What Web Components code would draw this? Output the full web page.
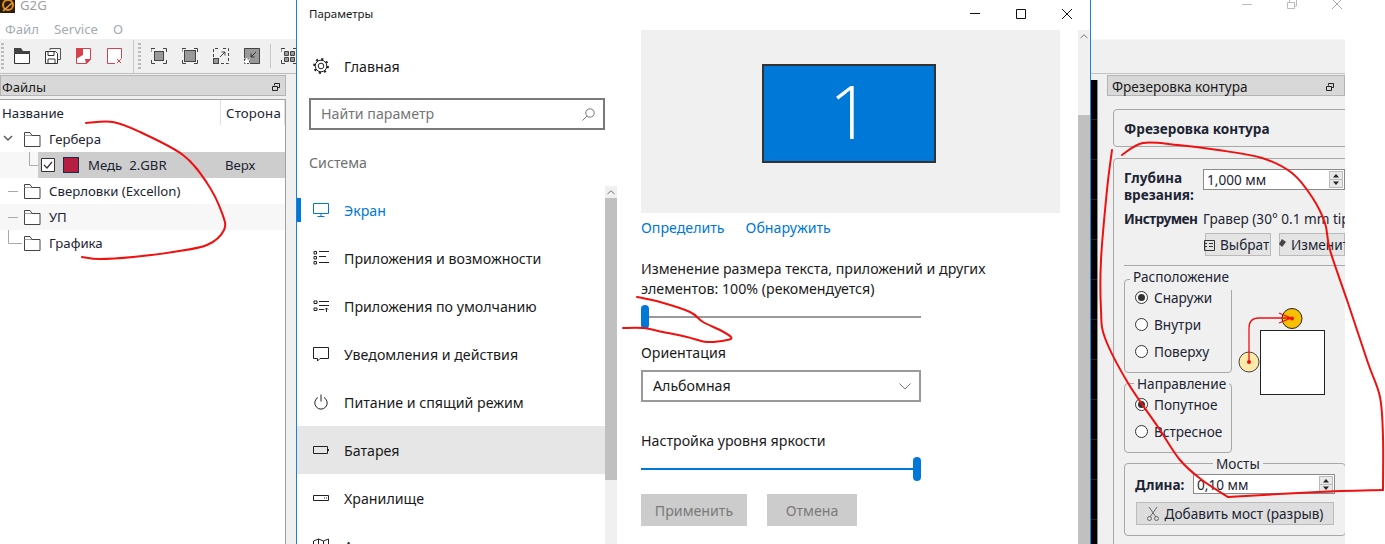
<!DOCTYPE html>
<html lang="ru">
<head>
<meta charset="utf-8">
<title>G2G</title>
<style>
  html, body { margin: 0; height: 544px; overflow: hidden; background: #fff; }
  body { display: flex; width: 1385px; position: relative; font-family: "Noto Sans", sans-serif; }
</style>
</head>
<body>
  <g2g-files></g2g-files>
  <settings-window></settings-window>
  <mill-pane></mill-pane>
  <ink-overlay></ink-overlay>

<script>
const QT_FONT = `font: 13.2px/17px "Noto Sans", sans-serif;`;

const TOOL_ICONS = {
  open: `<path d="M.5 5.5h15v10H.5z" fill="#fff" stroke="#333"/><path d="M0 0h7l2 3h7v2.5H0z" fill="#444"/>`,
  save: `<path d="M5 2V.5h10.5v11H13" fill="none" stroke="#555"/><path d="M.5 3.5h10l2 2v10H.5z" fill="#fff" stroke="#333"/><path d="M3 3.5h6v4H3zM3 11h7v4.5H3z" fill="none" stroke="#333"/>`,
  red: `<path d="M4 .5h10.5v11l-4 4H.5v-11" fill="#fff" stroke="#d8404f"/><path d="M0 0h7v7l-7 4zM9 11h6l-5 5z" fill="#d8404f"/>`,
  redx: `<path d="M8 15.5H.5V.5h14v10" fill="#fff" stroke="#d8404f"/><path d="M10 11l4 4m0-4l-4 4" stroke="#d8404f" fill="none"/>`,
  fitall: `<path d="M0 4V.5h4M12 .5h3.500V4M15.500 12v3.500H12M4 15.500H.5V12" fill="none" stroke="#444"/><rect x="3.500" y="3.500" width="9" height="9" fill="#999" stroke="#444"/>`,
  fit: `<path d="M0 4V.5h4M12 .5h3.500V4M15.500 12v3.500H12M4 15.500H.5V12" fill="none" stroke="#444"/><rect x="2.500" y="2.500" width="11" height="11" fill="#999" stroke="#444"/>`,
  zoomin: `<path d="M5 .5H.5V9M10 .5h5.500V15.500H7" fill="none" stroke="#444" stroke-dasharray="3 2"/><rect x=".5" y="10.500" width="5" height="5" fill="#999" stroke="#444"/><path d="M7 9l5-5M8.500 4H12v3.500" fill="none" stroke="#444"/>`,
  zoomout: `<path d="M0 0h16v16H6v-6H0z" fill="#999"/><path d="M.5 10V.5h15v15H6" fill="none" stroke="#444"/><path d="M.5 11v4.500h5V11z" fill="#fff" stroke="#444" stroke-dasharray="2 1.500"/><path d="M12 4L7 9M7 5.500V9h3.500" fill="none" stroke="#333"/>`,
  grid: `<path d="M0 4V.5h4M12 .5h3.500V4M15.500 12v3.500H12M4 15.500H.5V12" fill="none" stroke="#444"/><path d="M3.500 3.500h4v4h-4zM9.500 3.500h4v4h-4zM3.500 9.500h4v4h-4zM9.500 9.500h4v4h-4z" fill="#999" stroke="#444"/>`
};

const NAV_ICONS = {
  screen: `<path d="M.5 1.500h15v10H.5zM8 11.500v3M4.500 14.500h7" fill="none" stroke="currentColor"/>`,
  apps: `<path d="M1 1.500h2.500v2.500H1zM1 6.500h2.500V9H1zM1 11.500h2.500V14H1z" fill="none" stroke="currentColor"/><path d="M6 1.500h10M6 6.500h7M6 12.500h10" fill="none" stroke="currentColor"/>`,
  defaults: `<path d="M1 3h3v2.500H1zM1 10h3v2.500H1z" fill="none" stroke="currentColor"/><path d="M6 3.500h10M6 7.500h10M6 11.500h5M13.500 14v-4M12 11.500l1.500-1.500 1.500 1.500" fill="none" stroke="currentColor"/>`,
  notify: `<path d="M.5 1.500h15v11H7l-2.500 2.500v-2.500h-4z" fill="none" stroke="currentColor"/>`,
  power: `<path d="M5 3.500a6.200 6.200 0 1 0 6 0M8 .5v7" fill="none" stroke="currentColor"/>`,
  battery: `<path d="M.5 4.500h14v7H.5z" fill="none" stroke="currentColor"/><path d="M15 7h1v2h-1z" fill="currentColor"/>`,
  storage: `<path d="M.5 5.500h15v5H.5z" fill="none" stroke="currentColor"/><path d="M11 7.500h1v1h-1zM13 7.500h1v1h-1z" fill="currentColor"/>`,
  map: `<path d="M.5 3l5-2 5 2 5-2v11l-5 2-5-2-5 2zM5.500 1v11M10.500 3v11" fill="none" stroke="currentColor"/>`
};

class DockTitle extends HTMLElement {
  connectedCallback() {
    this.attachShadow({ mode: 'open' }).innerHTML = `
      <style>
        :host { display: flex; align-items: center; justify-content: space-between; height: 21px; box-sizing: border-box;
          background: #d8d8d8; border: 1px solid #b4b4b4; padding: 3px 5px 0 1px; ${QT_FONT} color: #1a1a1a; }
        svg { display: block; }
      </style>
      <slot></slot>
      <svg width="8" height="8" viewBox="0 0 8 8"><path d="M2.500 2.500V.5h5v4h-2M.5 3.500h5v4h-5z" fill="none" stroke="#222"/></svg>`;
  }
}

class TreeRow extends HTMLElement {
  connectedCallback() {
    const kind = this.getAttribute('kind') || 'line';
    const side = this.getAttribute('side') || '';
    const label = this.getAttribute('label');
    const prefix = {
      open: `<path d="M4 10l4 4 4-4" fill="none" stroke="#555" stroke-width="1.400"/>`,
      line: `<path d="M8 13.500h10" stroke="#aaa"/>`,
      last: `<path d="M8.500 0v13.500H22" fill="none" stroke="#aaa"/>`,
      child: `<path d="M29.500 0v13.500H38" fill="none" stroke="#aaa"/>`
    }[kind];
    const folder = `<svg class="folder" width="17" height="15" viewBox="0 0 17 15"><path d="M.5 3.500h15.500v11H.5z" fill="#fff" stroke="#444"/><path d="M.5 3.500V.5H6L8 3.500" fill="#fff" stroke="#444"/></svg>`;
    const file = `<svg class="check" width="14" height="14" viewBox="0 0 14 14"><path d="M.5.5h13v13H.5z" fill="#fff" stroke="#333"/><path d="M3 7l3 3 5-6" fill="none" stroke="#333" stroke-width="1.200"/></svg><span class="swatch"></span>`;
    this.attachShadow({ mode: 'open' }).innerHTML = `
      <style>
        :host { display: block; height: 26px; background: #fff; ${QT_FONT} color: #1c2433; }
        :host([alt]) { background: #f7f7f7; }
        .row { display: flex; align-items: center; height: 100%; position: relative; }
        .tree { position: absolute; left: 0; top: 0; }
        .folder { margin-left: 24px; flex: none; }
        .name { margin-left: 8px; white-space: pre; }
        .side { position: absolute; left: 225px; }
        :host([kind=child]) { background: #f7f7f7; }
        :host([kind=child]) .row { margin-left: 38px; background: #cdcdcd; }
        :host([kind=child]) .tree { left: -38px; }
        .check { margin-left: 3px; flex: none; }
        .swatch { width: 14px; height: 14px; margin-left: 8px; background: #b51f41; border: 1px solid #1d2c4c; flex: none; }
        :host([kind=child]) .name { margin-left: 9px; }
        :host([kind=child]) .side { left: 187px; }
      </style>
      <div class="row">
        <svg class="tree" width="40" height="26" viewBox="0 0 40 26">${prefix}</svg>
        ${kind === 'child' ? file : folder}
        <span class="name">${label}</span>
        <span class="side">${side}</span>
      </div>`;
  }
}

class G2gFiles extends HTMLElement {
  connectedCallback() {
    const tools = (names) => names.map((n) => `<svg width="16" height="16" viewBox="0 0 16 16">${TOOL_ICONS[n]}</svg>`).join('');
    this.attachShadow({ mode: 'open' }).innerHTML = `
      <style>
        :host { display: block; width: 296px; height: 544px; flex: none; background: #f0f0f0; overflow: hidden; ${QT_FONT} }
        .title { height: 20px; background: #fff; display: flex; gap: 5px; color: #a0a0a0; line-height: 11px; }
        .title svg { display: block; }
        .menu { height: 19px; background: #fff; display: flex; gap: 15px; padding-left: 5px; color: #a3abb3; line-height: 18px; }
        .bar { height: 35px; box-sizing: border-box; border-bottom: 1px solid #bdbdbd; display: flex; align-items: center; gap: 15px; padding-left: 1px; width: 400px; }
        .grip { width: 3px; height: 26px; margin-right: -5px; flex: none; background: repeating-linear-gradient(#bbb 0 2px, transparent 2px 4px); }
        .sep { width: 1px; height: 33px; background: #c8c8c8; margin: 0 -11px 0 -5px; }
        .sep.thin { height: 24px; margin: 0 -5px; }
        .dock { margin: 1px 10px 0 0; }
        .tree { margin: 3px 10px 0 0; height: 460px; background: #fff; border: 1px solid #a0a0a0; border-left: 0; }
        .head { height: 26px; display: flex; color: #1c2433; }
        .head span { padding: 5px 0 0 2px; box-sizing: border-box; height: 25px; border-right: 1px solid #e2e2e2; }
        .head .a { width: 221px; }
        .head .b { padding-left: 5px; width: 64px; letter-spacing: .2px; }
      </style>
      <div class="title">
        <svg width="15" height="13" viewBox="0 0 15 13"><path d="M0 0h15v13H0z" fill="#2a1c06"/><circle cx="8" cy="5" r="5" fill="none" stroke="#e08a1e" stroke-width="2"/><path d="M3 11l9-8" stroke="#f0a93a" stroke-width="1.500"/></svg>
        <span>G2G</span>
      </div>
      <div class="menu"><span>Файл</span><span>Service</span><span>О</span></div>
      <div class="bar">
        <span class="grip"></span>
        ${tools(['open', 'save', 'red', 'redx'])}
        <span class="sep"></span>
        <span class="grip"></span>
        ${tools(['fitall', 'fit', 'zoomin', 'zoomout'])}
        <span class="sep thin"></span>
        ${tools(['grid'])}
      </div>
      <dock-title class="dock">Файлы</dock-title>
      <div class="tree">
        <div class="head"><span class="a">Название</span><span class="b">Сторона</span></div>
        <tree-row kind="open" label="Гербера"></tree-row>
        <tree-row kind="child" label="Медь  2.GBR" side="Верх"></tree-row>
        <tree-row kind="line" label="Сверловки (Excellon)"></tree-row>
        <tree-row kind="line" alt label="УП"></tree-row>
        <tree-row kind="last" label="Графика"></tree-row>
      </div>`;
  }
}

class NavItem extends HTMLElement {
  connectedCallback() {
    const icon = NAV_ICONS[this.getAttribute('icon')];
    this.attachShadow({ mode: 'open' }).innerHTML = `
      <style>
        :host { display: flex; align-items: center; gap: 15px; height: 48px; padding: 2px 0 0 16px; box-sizing: border-box; color: #1a1a1a; position: relative; }
        :host([active]) { color: #0078d7; }
        :host([active])::before { content: ""; position: absolute; left: 0; top: 12px; width: 4px; height: 24px; background: #0078d7; }
        :host([hover]) { background: #e6e6e6; }
        svg { flex: none; display: block; color: #222; margin-top: -2px; }
        :host([active]) svg { color: #0078d7; }
      </style>
      <svg width="16" height="16" viewBox="0 0 16 16">${icon}</svg>
      <slot></slot>`;
  }
}

class UiSlider extends HTMLElement {
  connectedCallback() {
    this.attachShadow({ mode: 'open' }).innerHTML = `
      <style>
        :host { display: flex; align-items: center; height: 24px; width: 280px; position: relative; }
        .track { height: 2px; width: 100%; background: #999; }
        .thumb { position: absolute; left: 0; top: 0; width: 8px; height: 24px; border-radius: 4px; background: #0078d7; }
        :host([full]) .track { background: #0078d7; }
        :host([full]) .thumb { left: auto; right: 0; }
      </style>
      <div class="track"></div><div class="thumb"></div>`;
  }
}

class SettingsWindow extends HTMLElement {
  connectedCallback() {
    const chevron = `<svg width="8" height="5" viewBox="0 0 8 5"><path d="M.5 4L4 .8 7.5 4" fill="none" stroke="#777"/></svg>`;
    this.attachShadow({ mode: 'open' }).innerHTML = `
      <style>
        :host { display: flex; flex-direction: column; width: 795px; height: 544px; flex: none; box-sizing: border-box; background: #fff;
          border: 1px solid #1a80d9; border-width: 0 1px; font: 14.2px/20px "Noto Sans", sans-serif; color: #1a1a1a; }
        .titlebar { height: 30px; display: flex; align-items: center; padding-left: 12px; font-size: 11.500px; flex: none; padding-bottom: 3px; box-sizing: border-box; }
        .titlebar span { flex: 1; }
        .controls { display: flex; gap: 36px; padding-right: 18px; padding-top: 1px; }
        .controls svg { display: block; }
        .body { flex: 1; display: flex; min-height: 0; }
        .side { width: 320px; flex: none; display: flex; flex-direction: column; min-height: 0; }
        .home { height: 48px; margin-top: 13px; display: flex; align-items: center; gap: 15px; padding-left: 16px; }
        .home svg { display: block; margin-top: -2px; }
        .search { margin: 7px 12px 0; height: 32px; box-sizing: border-box; border: 2px solid #7a7a7a; display: flex; align-items: center; justify-content: space-between; padding: 0 8px 0 10px; color: #767676; }
        .sys { height: 56px; box-sizing: border-box; padding: 10px 0 0 12px; display: flex; align-items: center; color: #6f6f6f; flex: none; }
        .list { flex: 1; display: flex; min-height: 0; overflow: hidden; }
        .items { width: 308px; flex: none; }
        .scroll { width: 12px; flex: none; background: #f0f0f0; display: flex; flex-direction: column; }
        .scroll i { height: 12px; display: flex; align-items: center; justify-content: center; flex: none; }
        .scroll b { display: block; background: #c0c0c0; flex: none; }
        .main { flex: 1; display: flex; min-width: 0; }
        .content { flex: 1; padding-left: 24px; }
        .preview { width: 419px; height: 183px; box-sizing: border-box; background: #f0f0f0; padding: 34px 0 0 121px; }
        .monitor { width: 174px; height: 99px; box-sizing: border-box; padding-left: 2px; background: #0078d7; border: 2px solid #333; color: #fff;
          font: 300 74px/90px "Open Sans", sans-serif; text-align: center; }
        .links { margin-top: 5px; display: flex; gap: 21px; color: #0078d7; }
        .scale { margin-top: 21px; width: 360px; }
        .gap6 { margin-top: 6px; }
        .orient { margin-top: 14px; }
        .select { margin-top: 7px; width: 280px; height: 32px; box-sizing: border-box; border: 2px solid #999; display: flex; align-items: center; justify-content: space-between; padding: 0 8px 0 10px; }
        .bright { margin-top: 29px; }
        .buttons { margin-top: 13px; display: flex; gap: 20px; }
        .buttons span { height: 32px; box-sizing: border-box; padding-top: 2px; background: #ccc; color: #7a7a7a; display: flex; align-items: center; justify-content: center; }
      </style>
      <div class="titlebar">
        <span>Параметры</span>
        <div class="controls">
          <svg width="10" height="10" viewBox="0 0 10 10"><path d="M0 4.500h10" stroke="#111"/></svg>
          <svg width="10" height="10" viewBox="0 0 10 10"><path d="M.5.5h9v9h-9z" fill="none" stroke="#111"/></svg>
          <svg width="10" height="10" viewBox="0 0 10 10"><path d="M0 0l10 10M10 0L0 10" stroke="#111"/></svg>
        </div>
      </div>
      <div class="body">
        <div class="side">
          <div class="home">
            <svg width="16" height="16" viewBox="0 0 16 16"><circle cx="8" cy="8" r="2.800" fill="none" stroke="#222"/><circle cx="8" cy="8" r="5.800" fill="none" stroke="#222"/><circle cx="8" cy="8" r="7" fill="none" stroke="#222" stroke-width="1.800" stroke-dasharray="2.200 3.300"/></svg>
            <span>Главная</span>
          </div>
          <div class="search"><span>Найти параметр</span><svg width="13" height="13" viewBox="0 0 13 13"><circle cx="8" cy="5" r="4.200" fill="none" stroke="#777"/><path d="M5 8l-4.500 4.500" stroke="#777"/></svg></div>
          <div class="sys">Система</div>
          <div class="list">
            <div class="items">
              <nav-item icon="screen" active>Экран</nav-item>
              <nav-item icon="apps">Приложения и возможности</nav-item>
              <nav-item icon="defaults">Приложения по умолчанию</nav-item>
              <nav-item icon="notify">Уведомления и действия</nav-item>
              <nav-item icon="power">Питание и спящий режим</nav-item>
              <nav-item icon="battery" hover>Батарея</nav-item>
              <nav-item icon="storage">Хранилище</nav-item>
              <nav-item icon="map">Автономные карты</nav-item>
            </div>
            <div class="scroll"><i>${chevron}</i><b style="height:282px"></b></div>
          </div>
        </div>
        <div class="main">
          <div class="content">
            <div class="preview"><div class="monitor">1</div></div>
            <div class="links"><span>Определить</span><span>Обнаружить</span></div>
            <div class="scale">Изменение размера текста, приложений и других элементов: 100% (рекомендуется)</div>
            <ui-slider class="gap6"></ui-slider>
            <div class="orient">Ориентация</div>
            <div class="select"><span>Альбомная</span><svg width="12" height="7" viewBox="0 0 12 7"><path d="M.5.5L6 6 11.500.5" fill="none" stroke="#777"/></svg></div>
            <div class="bright">Настройка уровня яркости</div>
            <ui-slider class="gap6" full></ui-slider>
            <div class="buttons"><span style="width:106px">Применить</span><span style="width:90px">Отмена</span></div>
          </div>
          <div class="scroll"><i>${chevron}</i><i style="height:73px"></i><b style="flex:1"></b></div>
        </div>
      </div>`;
  }
}

class GroupBox extends HTMLElement {
  connectedCallback() {
    const title = this.getAttribute('title-text');
    this.attachShadow({ mode: 'open' }).innerHTML = `
      <style>
        :host { display: block; }
        fieldset { margin: 0; padding: 0; border: 1px solid #a8a8a8; border-radius: 4px; height: 100%; box-sizing: border-box; min-width: 0; }
        legend { padding: 0 3px var(--legend-drop, 0); margin-left: var(--legend-left, 5px); line-height: 15px; color: #1c2433; }
        .inner { margin-top: calc(0px - var(--legend-drop, 0px)); }
      </style>
      <fieldset><legend>${title}</legend><div class="inner"><slot></slot></div></fieldset>`;
  }
}

class RadioOpt extends HTMLElement {
  connectedCallback() {
    this.attachShadow({ mode: 'open' }).innerHTML = `
      <style>
        :host { display: flex; align-items: center; gap: 6px; height: 27px; padding-left: 10px; color: #1c2433; }
        i { width: 13px; height: 13px; box-sizing: border-box; border-radius: 50%; border: 1px solid #333; background: #fff; display: flex; align-items: center; justify-content: center; flex: none; }
        :host([checked]) i::after { content: ""; width: 7px; height: 7px; border-radius: 50%; background: #333; }
      </style>
      <i></i><slot></slot>`;
  }
}

class SpinBox extends HTMLElement {
  connectedCallback() {
    this.attachShadow({ mode: 'open' }).innerHTML = `
      <style>
        :host { display: flex; align-items: center; justify-content: space-between; box-sizing: border-box; background: #fff; border: 1px solid #8a8a8a; padding: 0 1px 0 3px; }
        .arrows { width: 14px; height: 17px; background: #e8e8e8; border: 1px solid #bbb; box-sizing: border-box; }
        svg { display: block; }
      </style>
      <slot></slot>
      <div class="arrows"><svg width="12" height="15" viewBox="0 0 12 15"><path d="M6 2l3 3.500H3zM3 9.500h6L6 13z" fill="#222"/><path d="M0 7.500h12" stroke="#bbb"/></svg></div>`;
  }
}

class MillPane extends HTMLElement {
  connectedCallback() {
    this.attachShadow({ mode: 'open' }).innerHTML = `
      <style>
        :host { display: block; width: 254px; height: 544px; flex: none; overflow: hidden; font: 13.6px/17px "Noto Sans", sans-serif; color: #1c2433; }
        .top { height: 39px; display: flex; box-sizing: border-box; padding-left: 151px; gap: 35px; background: #fff; }
        .top svg { display: block; }
        .bar { height: 35px; box-sizing: border-box; background: #f0f0f0; border-top: 1px solid #f8f8f8; border-bottom: 1px solid #c4c4c4; }
        .rest { display: flex; height: 470px; background: #f0f0f0; }
        .canvas { width: 7px; margin-top: 6px; flex: none; box-sizing: border-box; border-right: 1px solid #8c8c8c;
          background: repeating-linear-gradient(#000 0 39px, #223 39px 40px); }
        .panel { margin-left: 9px; flex: 1; min-width: 0; }
        .panel dock-title { margin-top: 1px; padding: 2px 10px 0 4px; font-size: 13.6px; }
        .panel .cap { margin: 13px -10px 0 6px; height: 38px; box-sizing: border-box; border: 1px solid #a8a8a8; border-radius: 4px; padding-left: 10px; display: flex; align-items: center; font-weight: 700; }
        .form { margin: 11px -10px 0 6px; height: 400px; box-sizing: border-box; border: 1px solid #a8a8a8; border-radius: 4px; padding: 10px 0 0 10px; }
        .depth { display: flex; height: 38px; }
        .depth b { width: 79px; flex: none; }
        .depth spin-box { width: 142px; height: 21px; }
        .tool { display: flex; height: 23px; align-items: center; white-space: nowrap; }
        .tool b { width: 79px; flex: none; letter-spacing: -.5px; }
        .btns { display: flex; gap: 8px; margin: 3px 0 0 81px; }
        .btns span { width: 66px; height: 23px; box-sizing: border-box; background: #e4e4e4; border: 1px solid #bbb; display: flex; align-items: center; gap: 4px; white-space: nowrap; }
        .btns svg { flex: none; margin-left: -2px; }
        hr { margin: 9px 0 0 0; border: 0; border-top: 1px solid #a8a8a8; }
        .place { display: flex; margin-top: 3px; gap: 6px; }
        .placecol { width: 108px; flex: none; }
        .gplace { height: 104px; --legend-drop: 6px; }
        .gdir { height: 77px; margin-top: 3px; --legend-left: 9px; }
        .place svg { margin-top: 37px; display: block; flex: none; }
        .bridge { margin-top: 3px; width: 222px; height: 80px; --legend-left: 88px; }
        .len { display: flex; align-items: center; margin: 3px 0 0 10px; height: 20px; }
        .len b { width: 58px; flex: none; }
        .len spin-box { width: 142px; height: 20px; }
        .add { margin: 8px 0 0 11px; width: 198px; height: 23px; box-sizing: border-box; background: #ddd; border: 1px solid #bbb; display: flex; align-items: center; justify-content: center; gap: 6px; }
      </style>
      <div class="top">
        <svg width="10" height="10" viewBox="0 0 10 10"><path d="M0 4.500h10" stroke="#bbb"/></svg>
        <svg width="10" height="10" viewBox="0 0 10 10"><path d="M2.500 2V-1h7v7H7M.5 2.500h7v6h-7z" fill="none" stroke="#bbb"/></svg>
        <svg width="10" height="10" viewBox="0 0 10 10"><path d="M0-1l10 10M10-1L0 9" stroke="#aaa"/></svg>
      </div>
      <div class="bar"></div>
      <div class="rest">
        <div class="canvas"></div>
        <div class="panel">
          <dock-title>Фрезеровка контура</dock-title>
          <div class="cap">Фрезеровка контура</div>
          <div class="form">
            <div class="depth"><b>Глубина врезания:</b><spin-box>1,000 мм</spin-box></div>
            <div class="tool"><b>Инструмен</b><span>Гравер (30° 0.1 mm tip</span></div>
            <div class="btns">
              <span><svg width="12" height="12" viewBox="0 0 12 12"><path d="M.5 1.500h10v10H.5zM0 4.500h3M0 7.500h3M5 4.500h4M5 7.500h4" fill="none" stroke="#333"/></svg>Выбрат</span>
              <span><svg width="9" height="12" viewBox="0 0 9 12"><path d="M4 0l4 3-4 5-3-3z" fill="#444"/></svg>Изменит</span>
            </div>
            <hr>
            <div class="place">
              <div class="placecol">
                <group-box class="gplace" title-text="Расположение">
                  <radio-opt checked>Снаружи</radio-opt>
                  <radio-opt>Внутри</radio-opt>
                  <radio-opt>Поверху</radio-opt>
                </group-box>
                <group-box class="gdir" title-text="Направление">
                  <radio-opt checked>Попутное</radio-opt>
                  <radio-opt>Встресное</radio-opt>
                </group-box>
              </div>
              <svg width="88" height="90" viewBox="1238 306 88 90">
                <rect x="1260.500" y="330.500" width="64" height="64" fill="#fff" stroke="#222"/>
                <circle cx="1292" cy="318.500" r="10" fill="#f7bf00" stroke="#222"/>
                <circle cx="1249" cy="362" r="10" fill="#fde9a8" stroke="#444"/>
                <path d="M1249 362v-34q0-10 10-10h32M1279 313l12 5-12 5" fill="none" stroke="#f01010" stroke-width="1.300"/>
                <circle cx="1292" cy="318.500" r="2" fill="#f01010"/>
                <circle cx="1249" cy="362" r="2" fill="#f01010"/>
              </svg>
            </div>
            <group-box class="bridge" title-text="Мосты">
              <div class="len"><b>Длина:</b><spin-box>0,10 мм</spin-box></div>
              <div class="add"><svg width="12" height="14" viewBox="0 0 12 14"><path d="M2 0l7 10M10 0L3 10" stroke="#666" fill="none"/><circle cx="2.500" cy="11.500" r="2" fill="none" stroke="#666"/><circle cx="9.500" cy="11.500" r="2" fill="none" stroke="#666"/></svg>Добавить мост (разрыв)</div>
            </group-box>
          </div>
        </div>
      </div>`;
  }
}

class InkOverlay extends HTMLElement {
  connectedCallback() {
    const strokes = [
      [[86,123],[113,122],[140,132],[183,155],[207,183],[222,213],[224,230],[207,245],[173,252],[133,257],[100,259],[82,257]],
      [[637,297],[660,302],[690,312],[703,322],[720,330],[731,337],[727,340],[707,342],[687,337],[663,332],[643,328],[623,328]],
      [[1122,155],[1143,143],[1178,145],[1218,150],[1262,158],[1292,173],[1312,197],[1325,223],[1330,250],[1348,303],[1368,363],[1380,397],[1383,437],[1383,490]],
      [[1383,490],[1318,492],[1228,497]],
      [[1228,497],[1202,480],[1180,460],[1158,427],[1128,383],[1105,338],[1101,310],[1101,260],[1107,190],[1112,150]]
    ];
    const smooth = (p) => {
      let d = `M${p[0][0]} ${p[0][1]}`;
      for (let i = 0; i < p.length - 1; i++) {
        const a = p[i - 1] || p[i], b = p[i], c = p[i + 1], e = p[i + 2] || c;
        d += `C${b[0] + (c[0] - a[0]) / 6} ${b[1] + (c[1] - a[1]) / 6} ${c[0] - (e[0] - b[0]) / 6} ${c[1] - (e[1] - b[1]) / 6} ${c[0]} ${c[1]}`;
      }
      return d;
    };
    this.attachShadow({ mode: 'open' }).innerHTML = `
      <style>:host { position: absolute; inset: 0; pointer-events: none; } svg { display: block; }</style>
      <svg width="1385" height="544" viewBox="0 0 1385 544">
        ${strokes.map((s) => `<path d="${smooth(s)}" fill="none" stroke="#f01010" stroke-width="2" stroke-linecap="round"/>`).join('')}
      </svg>`;
  }
}

customElements.define('dock-title', DockTitle);
customElements.define('tree-row', TreeRow);
customElements.define('g2g-files', G2gFiles);
customElements.define('nav-item', NavItem);
customElements.define('ui-slider', UiSlider);
customElements.define('settings-window', SettingsWindow);
customElements.define('group-box', GroupBox);
customElements.define('radio-opt', RadioOpt);
customElements.define('spin-box', SpinBox);
customElements.define('mill-pane', MillPane);
customElements.define('ink-overlay', InkOverlay);
</script>
</body>
</html>
